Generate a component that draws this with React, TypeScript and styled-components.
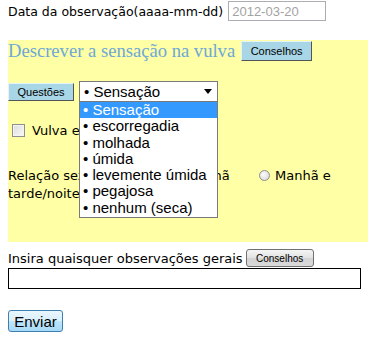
import React from "react";
import styled, { createGlobalStyle } from "styled-components";

const Global = createGlobalStyle`
  body {
    margin: 0;
    padding: 0 8px;
    background: #ffffff;
    font-family: "DejaVu Sans", Verdana, sans-serif;
    font-size: 13px;
    color: #000;
  }
`;

const options = [
  "Sensação",
  "escorregadia",
  "molhada",
  "úmida",
  "levemente úmida",
  "pegajosa",
  "nenhum (seca)",
];

const App = () => {
  return (
    <>
      <Global />
      <DateRow>
        <DateLabel>Data da observação(aaaa-mm-dd)</DateLabel>
        <DateInput placeholder="2012-03-20" />
      </DateRow>

      <Panel>
        <HeadRow>
          <Heading>Descrever a sensação na vulva</Heading>
          <BlueButton $w={71} $h={20}>Conselhos</BlueButton>
        </HeadRow>

        <SelectRow>
          <BlueButton $w={66} $h={18}>Questões</BlueButton>
          <SelectWrap>
            <SelectBox>
              <span>• Sensação</span>
              <Arrow />
            </SelectBox>
            <DropList>
              {options.map((o, i) => (
                <DropItem key={o} $active={i === 0}>
                  • {o}
                </DropItem>
              ))}
            </DropList>
          </SelectWrap>
        </SelectRow>

        <CheckRow>
          <CheckBox />
          <span>Vulva está inchada</span>
        </CheckRow>

        <Relation>
          Relação sexual ontem <Radio $lead={13} /> manhã <Radio $lead={25} /> Manhã e
          tarde/noite
        </Relation>
      </Panel>

      <NotesRow>
        <span>Insira quaisquer observações gerais</span>
        <GreyButton>Conselhos</GreyButton>
      </NotesRow>
      <NotesInput />

      <SubmitButton>Enviar</SubmitButton>
    </>
  );
};

export default App;

const DateRow = styled.div`
  display: flex;
  align-items: center;
  height: 22px;
  white-space: nowrap;
`;

const DateLabel = styled.span`
  font-size: 12.5px;
`;

const DateInput = styled.input`
  box-sizing: border-box;
  width: 98px;
  height: 20px;
  margin: 0 0 0 5px;
  padding: 0 3px;
  border: 1px solid #abadb3;
  font-family: "Liberation Sans", Arial, sans-serif;
  font-size: 13px;
  outline: none;
  &::placeholder {
    color: #a3a3a3;
  }
`;

const Panel = styled.div`
  margin-top: 18px;
  width: 360px;
  background: #ffffa6;
  padding-bottom: 39px;
`;

const HeadRow = styled.div`
  display: flex;
  align-items: center;
  height: 21px;
`;

const Heading = styled.h2`
  margin: 0 6px 0 0;
  font-family: "Liberation Serif", "Times New Roman", serif;
  font-weight: normal;
  font-size: 18.6px;
  color: #6ea8d6;
  white-space: nowrap;
`;

const BlueButton = styled.button<{ $w: number; $h: number }>`
  box-sizing: border-box;
  width: ${(p) => p.$w}px;
  height: ${(p) => p.$h}px;
  padding: 0;
  background: #a8d6e6;
  border: 1px solid;
  border-color: #e4f3f8 #555 #555 #e4f3f8;
  font-family: "Liberation Sans", Tahoma, sans-serif;
  font-size: 11px;
  color: #000;
`;

const SelectRow = styled.div`
  display: flex;
  align-items: center;
  margin-top: 20px;
  height: 21px;
`;

const SelectWrap = styled.div`
  position: relative;
  margin-left: 5px;
`;

const SelectBox = styled.div`
  box-sizing: border-box;
  width: 139px;
  height: 21px;
  display: flex;
  align-items: center;
  justify-content: space-between;
  padding: 0 4px 0 4px;
  background: #fff;
  border: 1px solid #7a7a7a;
  font-family: "Liberation Sans", Arial, sans-serif;
  font-size: 15px;
`;

const Arrow = styled.span`
  width: 0;
  height: 0;
  margin-right: 1px;
  border-left: 4px solid transparent;
  border-right: 4px solid transparent;
  border-top: 5px solid #000;
`;

const DropList = styled.div`
  position: absolute;
  top: 21px;
  left: 0;
  z-index: 5;
  box-sizing: border-box;
  width: 139px;
  background: #fff;
  border: 1px solid #7a7a7a;
  border-top: none;
  padding-bottom: 1px;
`;

const DropItem = styled.div<{ $active?: boolean }>`
  height: 16.3px;
  line-height: 16px;
  padding-left: 3px;
  font-family: "Liberation Sans", Arial, sans-serif;
  font-size: 15px;
  white-space: nowrap;
  background: ${(p) => (p.$active ? "#3399ff" : "transparent")};
  color: ${(p) => (p.$active ? "#fff" : "#000")};
`;

const CheckRow = styled.div`
  display: flex;
  align-items: center;
  height: 18px;
  margin-top: 19px;
  padding-left: 4px;
`;

const CheckBox = styled.span`
  box-sizing: border-box;
  width: 13px;
  height: 13px;
  margin-right: 7px;
  border: 1px solid #8f8f8f;
  background: linear-gradient(135deg, #dcdcdc, #fafafa);
  box-shadow: inset 0 0 0 1px #f4f4f4;
`;

const Relation = styled.p`
  margin: 28px 0 0 0;
  line-height: 18px;
`;

const Radio = styled.span<{ $lead: number }>`
  display: inline-block;
  box-sizing: border-box;
  width: 11px;
  height: 11px;
  margin: 0 1px 0 ${(p) => p.$lead}px;
  border-radius: 50%;
  border: 1px solid #8f8f8f;
  background: radial-gradient(circle at 40% 40%, #fbfbfb, #d4d4d4);
  vertical-align: -1px;
`;

const NotesRow = styled.div`
  display: flex;
  align-items: center;
  margin-top: 7px;
  height: 18px;
  white-space: nowrap;
`;

const GreyButton = styled.button`
  box-sizing: border-box;
  width: 68px;
  height: 18px;
  margin-left: 3px;
  padding: 0;
  border: 1px solid #707070;
  border-radius: 3px;
  background: linear-gradient(#f4f4f4, #e2e2e2 50%, #d3d3d3 51%, #dadada);
  font-family: "Liberation Sans", Tahoma, sans-serif;
  font-size: 10px;
  color: #000;
`;

const NotesInput = styled.input`
  display: block;
  box-sizing: border-box;
  width: 353px;
  height: 21px;
  margin: 1px 0 0 0;
  border: 1px solid #000;
  outline: none;
`;

const SubmitButton = styled.button`
  display: block;
  box-sizing: border-box;
  width: 55px;
  height: 22px;
  margin-top: 21px;
  padding: 0;
  border: 1px solid #3c7fb1;
  border-radius: 3px;
  background: linear-gradient(#eaf6fd, #d9f0fc 50%, #bee6fd 51%, #a7d9f5);
  font-family: "Liberation Sans", Arial, sans-serif;
  font-size: 15px;
  color: #000;
`;
